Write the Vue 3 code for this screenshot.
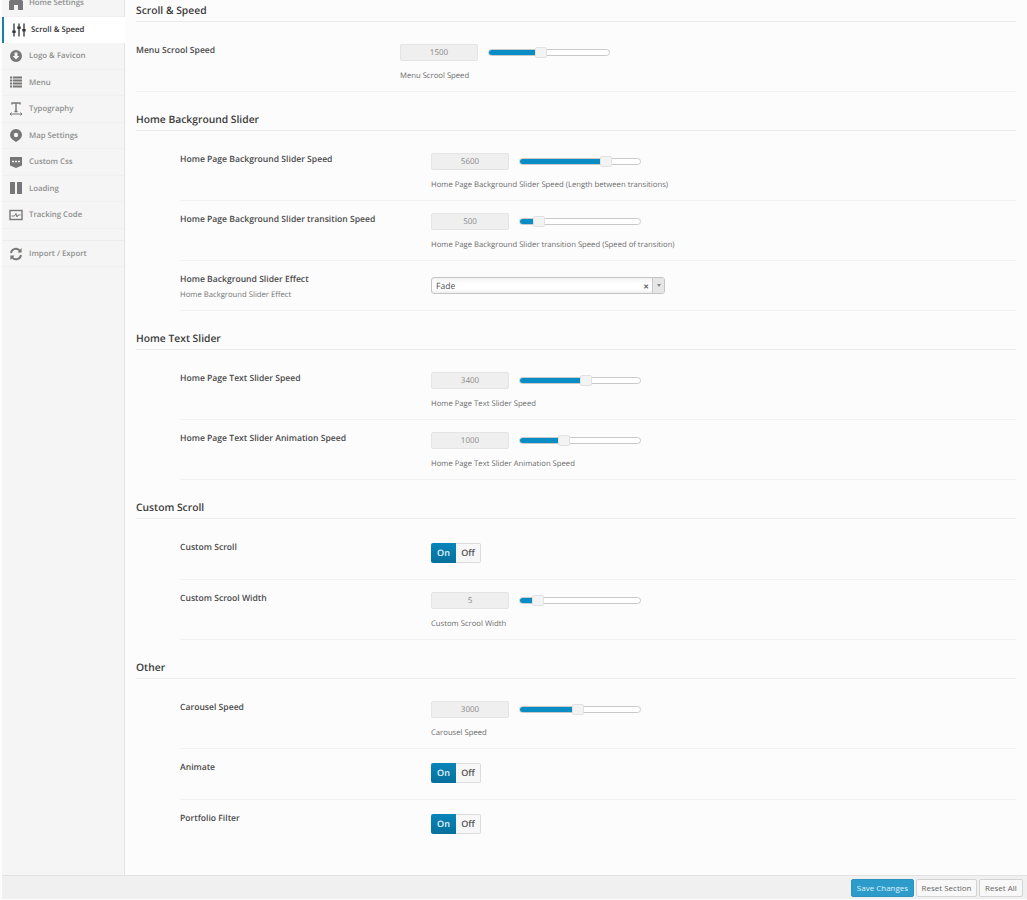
<script setup>
const nav = [
  { label: 'Home Settings', icon: 'home' },
  { label: 'Scroll & Speed', icon: 'sliders', active: true },
  { label: 'Logo & Favicon', icon: 'download' },
  { label: 'Menu', icon: 'list' },
  { label: 'Typography', icon: 'type' },
  { label: 'Map Settings', icon: 'pin' },
  { label: 'Custom Css', icon: 'css' },
  { label: 'Loading', icon: 'pause' },
  { label: 'Tracking Code', icon: 'chart' },
  { label: 'Import / Export', icon: 'refresh', sep: true },
]
const sections = [
  { title: 'Scroll & Speed', flat: true, rows: [
    { type: 'slider', label: 'Menu Scrool Speed', value: '1500', pos: 43, desc: 'Menu Scrool Speed' },
  ] },
  { title: 'Home Background Slider', rows: [
    { type: 'slider', label: 'Home Page Background Slider Speed', value: '5600', pos: 72, desc: 'Home Page Background Slider Speed (Length between transitions)' },
    { type: 'slider', label: 'Home Page Background Slider transition Speed', value: '500', pos: 15.5, desc: 'Home Page Background Slider transition Speed (Speed of transition)' },
    { type: 'choice', label: 'Home Background Slider Effect', sub: 'Home Background Slider Effect', value: 'Fade' },
  ] },
  { title: 'Home Text Slider', rows: [
    { type: 'slider', label: 'Home Page Text Slider Speed', value: '3400', pos: 55, desc: 'Home Page Text Slider Speed' },
    { type: 'slider', label: 'Home Page Text Slider Animation Speed', value: '1000', pos: 37, desc: 'Home Page Text Slider Animation Speed' },
  ] },
  { title: 'Custom Scroll', rows: [
    { type: 'toggle', label: 'Custom Scroll' },
    { type: 'slider', label: 'Custom Scrool Width', value: '5', pos: 14.7, desc: 'Custom Scrool Width' },
  ] },
  { title: 'Other', rows: [
    { type: 'slider', label: 'Carousel Speed', value: '3000', pos: 48, desc: 'Carousel Speed' },
    { type: 'toggle', label: 'Animate' },
    { type: 'toggle', label: 'Portfolio Filter', last: true },
  ] },
]
</script>

<template>
  <div class="page">
    <div class="top">
      <aside class="sidebar">
        <ul class="nav">
          <li v-for="item in nav" :key="item.label" class="nav-item" :class="{ active: item.active, sep: item.sep }">
            <svg class="icon" viewBox="0 0 14 14" width="14" height="14" aria-hidden="true">
              <path v-if="item.icon === 'home'" d="M7 0 L14 5 V14 H9 V9 H5 V14 H0 V5 Z" fill="currentColor" />
              <g v-else-if="item.icon === 'sliders'" stroke="currentColor" fill="currentColor">
                <path d="M2 0.5 V13.5 M7 0.5 V13.5 M12 0.5 V13.5" stroke-width="1.3" fill="none" />
                <rect x="0.3" y="7.5" width="3.4" height="2.4" stroke="none" />
                <rect x="5.3" y="3.5" width="3.4" height="2.4" stroke="none" />
                <rect x="10.3" y="6" width="3.4" height="2.4" stroke="none" />
              </g>
              <path v-else-if="item.icon === 'download'" fill-rule="evenodd" d="M7 1 A6 6 0 1 1 7 13 A6 6 0 1 1 7 1 Z M5.5 3.5 V7 H3.5 L7 10.5 L10.5 7 H8.5 V3.5 Z" fill="currentColor" />
              <g v-else-if="item.icon === 'list'" fill="currentColor">
                <rect x="1" y="1.5" width="2.2" height="2" /><rect x="4" y="1.5" width="9" height="2" />
                <rect x="1" y="4.5" width="2.2" height="2" /><rect x="4" y="4.5" width="9" height="2" />
                <rect x="1" y="7.5" width="2.2" height="2" /><rect x="4" y="7.5" width="9" height="2" />
                <rect x="1" y="10.5" width="2.2" height="2" /><rect x="4" y="10.5" width="9" height="2" />
              </g>
              <g v-else-if="item.icon === 'type'" fill="none" stroke="currentColor">
                <path d="M3 2.5 V1 H11 V2.5 M7 1 V9.5 M5.5 9.5 H8.5" stroke-width="1.4" />
                <path d="M1 12 H13" stroke-width="1" />
                <path d="M2.5 10.5 L1 12 L2.5 13.5 M11.5 10.5 L13 12 L11.5 13.5" stroke-width="1" />
              </g>
              <path v-else-if="item.icon === 'pin'" fill-rule="evenodd" d="M7 1 A6 6 0 0 1 13 7 C13 10 10 12 7 14 C4 12 1 10 1 7 A6 6 0 0 1 7 1 Z M7 4.8 A2.2 2.2 0 1 0 7 9.2 A2.2 2.2 0 1 0 7 4.8 Z" fill="currentColor" />
              <g v-else-if="item.icon === 'css'">
                <path d="M1 2 H13 V10.5 L7 13 L1 10.5 Z" fill="currentColor" />
                <path d="M3 6.5 H5 M6 6.5 H8 M9 6.5 H11" stroke="#f6f6f6" stroke-width="1.4" />
              </g>
              <g v-else-if="item.icon === 'pause'" fill="currentColor">
                <rect x="1" y="1" width="5" height="12" /><rect x="8" y="1" width="5" height="12" />
              </g>
              <g v-else-if="item.icon === 'chart'" fill="none" stroke="currentColor">
                <rect x="1" y="2.5" width="12" height="9" stroke-width="1.4" />
                <path d="M2.5 8 H5.5 L7 5.5 L8 9 L9.2 7 H11.5" stroke-width="1" />
              </g>
              <g v-else fill="none" stroke="currentColor" stroke-width="1.9">
                <path d="M2 6 A5 5 0 0 1 11 3.8" />
                <path d="M12 8 A5 5 0 0 1 3 10.2" />
                <path d="M12.6 1 V5.4 H8.4 Z M1.4 13 V8.6 H5.6 Z" fill="currentColor" stroke="none" />
              </g>
            </svg>
            <span>{{ item.label }}</span>
          </li>
        </ul>
      </aside>

      <main class="content">
        <section v-for="section in sections" :key="section.title" class="section" :class="{ flat: section.flat }">
          <h2 class="heading">{{ section.title }}</h2>
          <div class="rows">
            <div v-for="row in section.rows" :key="row.label" class="row" :class="['row-' + row.type, { last: row.last }]">
              <div class="label-col">
                <div class="label">{{ row.label }}</div>
                <div v-if="row.sub" class="sub">{{ row.sub }}</div>
              </div>
              <div class="field">
                <template v-if="row.type === 'slider'">
                  <div class="slider-line">
                    <div class="num">{{ row.value }}</div>
                    <div class="track">
                      <div class="fill" :style="{ width: row.pos + '%' }"></div>
                      <div class="handle" :style="{ left: row.pos + '%' }"></div>
                    </div>
                  </div>
                  <div class="desc">{{ row.desc }}</div>
                </template>
                <div v-else-if="row.type === 'choice'" class="select">
                  <span class="select-value">{{ row.value }}</span>
                  <span class="clear">×</span>
                  <span class="arrow"><i></i></span>
                </div>
                <div v-else class="switch">
                  <span class="on">On</span>
                  <span class="off">Off</span>
                </div>
              </div>
            </div>
          </div>
        </section>
      </main>
    </div>

    <footer class="footer">
      <button class="btn primary">Save Changes</button>
      <button class="btn">Reset Section</button>
      <button class="btn">Reset All</button>
    </footer>
  </div>
</template>

<style>
html, body { margin: 0; background: #fff; }
</style>

<style scoped>
.page {
  width: 1027px;
  height: 900px;
  display: flex;
  flex-direction: column;
  overflow: hidden;
  font-family: "Open Sans", "Liberation Sans", sans-serif;
  text-rendering: geometricPrecision;
  font-size: 8px;
  color: #555;
  background: #fcfcfc;
}
.top { flex: 1; display: flex; min-height: 0; padding-left: 2px; }
.sidebar {
  width: 122px;
  flex: none;
  background: #f5f5f5;
  border-right: 1px solid #e3e3e3;
}
.nav { list-style: none; margin: -10px 0 0; padding: 0; }
.nav-item {
  height: 26.5px;
  box-sizing: border-box;
  display: flex;
  align-items: center;
  gap: 6px;
  padding-left: 7px;
  padding-top: 1px;
  color: #8f8f8f;
  font-size: 7.8px;
  font-weight: 600;
  border-bottom: 1px solid #f0f0f0;
}
.nav-item .icon { flex: none; color: #777; margin-top: -1px; }
.nav-item.active {
  position: relative;
  margin: 0 -1px 0 0;
  padding-left: 8px;
  gap: 5px;
  background: #fff;
  color: #333;
  border-left: 2px solid #1a7fa8;
  border-bottom: 0;
}
.nav-item.active .icon { color: #333; }
.nav-item.sep { margin-top: 11.5px; border-top: 1px solid #ececec; height: 27px; }

.content { flex: 1; min-width: 0; padding: 0 11px 0 11px; }
.section { margin-top: 17px; }
.section.flat { margin-top: 0; }
.heading {
  margin: 0 0 10px;
  height: 22px;
  box-sizing: border-box;
  border-bottom: 1px solid #ececec;
  font-size: 10.3px;
  line-height: 23.5px;
  font-weight: 600;
  color: #3a3a3a;
}
.section .rows { padding-left: 44px; }
.section.flat .rows { padding-left: 0; }
.row {
  display: flex;
  box-sizing: border-box;
  padding-top: 12px;
  height: 60px;
  border-bottom: 1px solid #f2f2f2;
}
.row-choice { height: 50px; padding-top: 16px; }
.row-toggle { height: 51px; padding-top: 14px; }
.row.last { border-bottom: 0; }
.label-col { width: 251px; flex: none; }
.section.flat .label-col { width: 264px; }
.label { font-size: 8.6px; line-height: 13px; font-weight: 600; color: #4a4a4a; }
.row-slider .label { margin-top: 0; }
.row-toggle .label { margin-top: -2px; }
.row-choice .label { margin-top: -4px; }
.sub { font-size: 7.7px; line-height: 12px; margin-top: 3px; color: #777; }
.field { flex: 1; }
.slider-line { display: flex; align-items: center; gap: 10px; }
.num {
  width: 78px;
  height: 17px;
  box-sizing: border-box;
  background: #efefef;
  border: 1px solid #e4e4e4;
  border-radius: 2px;
  text-align: center;
  font-size: 8px;
  line-height: 16px;
  color: #888;
}
.track {
  position: relative;
  width: 122px;
  height: 7px;
  margin-top: -1px;
  box-sizing: border-box;
  background: #fff;
  border: 1px solid #c9c9c9;
  border-radius: 4px;
}
.fill {
  height: 5px;
  background: #0a8cc4;
  border-radius: 3px 0 0 3px;
}
.handle {
  position: absolute;
  top: -3px;
  width: 12px;
  height: 11px;
  margin-left: -6px;
  box-sizing: border-box;
  background: #f3f3f3;
  border: 1px solid #e2e2e2;
  border-radius: 2px;
}
.desc { margin-top: 9px; font-size: 7.7px; line-height: 12px; color: #6d6d6d; }
.select {
  position: relative;
  width: 234px;
  height: 17px;
  box-sizing: border-box;
  display: flex;
  align-items: center;
  border: 1px solid #c4c4c4;
  border-radius: 3px;
  background: linear-gradient(#f3f3f3, #fff 40%, #fff 75%, #eee);
  font-size: 8.6px;
  color: #555;
  padding-left: 4px;
}
.select-value { flex: 1; }
.clear { font-size: 10px; font-weight: 700; color: #666; margin-right: 3px; line-height: 1; }
.arrow {
  width: 11px;
  height: 100%;
  display: flex;
  align-items: center;
  justify-content: center;
  background: #e6e6e6;
  border-left: 1px solid #c9c9c9;
  border-radius: 0 2px 2px 0;
}
.arrow i {
  width: 0;
  height: 0;
  border-left: 2px solid transparent;
  border-right: 2px solid transparent;
  border-top: 3px solid #888;
}
.switch {
  display: inline-flex;
  height: 20px;
  font-size: 9px;
  font-weight: 600;
  line-height: 20px;
  text-align: center;
}
.on {
  width: 25px;
  background: linear-gradient(#0a85b9, #06709d);
  color: #e6f4fa;
  border-radius: 2px 0 0 2px;
}
.off {
  width: 24px;
  line-height: 18px;
  background: #f7f7f7;
  border: 1px solid #dcdcdc;
  border-left: 0;
  color: #555;
  border-radius: 0 2px 2px 0;
}
.footer {
  margin: 0 0 1px 2px;
  height: 24px;
  flex: none;
  box-sizing: border-box;
  display: flex;
  justify-content: flex-end;
  align-items: center;
  gap: 2px;
  padding-right: 4px;
  background: #f0f0f0;
  border-top: 1px solid #e2e2e2;
}
.btn {
  height: 18px;
  padding: 0 0 1px;
  box-sizing: border-box;
  font-family: inherit;
  font-size: 8px;
  color: #666;
  background: #f8f8f8;
  border: 1px solid #d4d4d4;
  border-radius: 2px;
  width: 61px;
}
.btn:last-child { width: 44px; }
.btn.primary {
  width: 63px;
  background: #2d9ccb;
  border-color: #2a92be;
  color: #dff1f9;
}
</style>
